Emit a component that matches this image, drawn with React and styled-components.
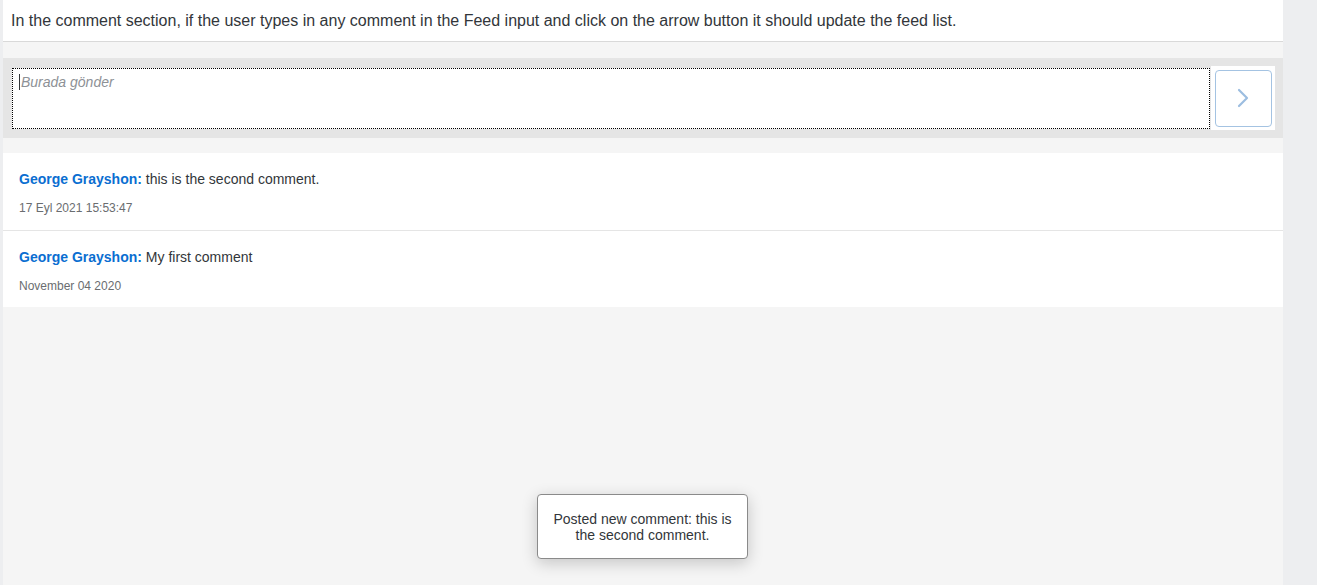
import React from "react";
import styled, { createGlobalStyle } from "styled-components";

const GlobalStyle = createGlobalStyle`
  html, body {
    margin: 0;
    padding: 0;
    height: 100%;
    background: #edeef0;
    font-family: "Liberation Sans", Arial, sans-serif;
  }
  #root {
    height: 100%;
  }
`;

const Shell = styled.div`
  display: flex;
  height: 585px;
  padding-left: 3px;
`;

const Page = styled.div`
  width: 1280px;
  background: #f5f5f5;
  display: flex;
  flex-direction: column;
  position: relative;
`;

const Header = styled.div`
  height: 41px;
  background: #fff;
  border-bottom: 1px solid #d9d9d9;
  display: flex;
  align-items: center;
  padding-left: 8px;
  font-size: 16px;
  color: #32363a;
`;

const FeedInput = styled.div`
  margin-top: 16px;
  background: #e5e5e5;
  height: 80px;
  display: flex;
  align-items: center;
  padding: 0 8px 0 9px;
`;

const TextBox = styled.div`
  flex: 1;
  height: 61px;
  background: #fff;
  border: 1px dotted #000;
  box-sizing: border-box;
  padding: 5px 8px;
  font-size: 14px;
  line-height: 16px;
  font-style: italic;
  color: #8d9196;
`;

const Caret = styled.span`
  display: inline-block;
  width: 1px;
  height: 16px;
  background: #32363a;
  vertical-align: -3px;
  margin-left: -2px;
  margin-right: 1px;
`;

const ButtonWrap = styled.div`
  width: 64px;
  height: 64px;
  background: #fff;
  margin-left: 1px;
  display: flex;
  align-items: center;
  justify-content: center;
`;

const PostButton = styled.button`
  width: 57px;
  height: 57px;
  border: 1px solid #a4c3e2;
  border-radius: 4px;
  background: #fff;
  display: flex;
  align-items: center;
  justify-content: center;
  padding: 0;
`;

const FeedList = styled.ul`
  list-style: none;
  margin: 15px 0 0;
  padding: 0;
  background: #fff;
`;

const FeedItem = styled.li`
  height: 77px;
  box-sizing: border-box;
  padding: 17px 16px 0;
  border-top: ${(p) => (p.first ? "none" : "1px solid #e5e5e5")};
`;

const Line = styled.div`
  font-size: 14px;
  color: #32363a;
  line-height: 18px;
`;

const Sender = styled.span`
  color: #0a6ed1;
  font-weight: bold;
`;

const Stamp = styled.div`
  font-size: 12px;
  line-height: 14px;
  color: #6a6d70;
  margin-top: 13px;
`;

const Toast = styled.div`
  position: absolute;
  left: 534px;
  top: 494px;
  width: 211px;
  height: 65px;
  box-sizing: border-box;
  background: #fff;
  border: 1px solid #8a8a8a;
  border-radius: 4px;
  box-shadow: 0 4px 16px rgba(0, 0, 0, 0.2);
  display: flex;
  align-items: center;
  justify-content: center;
  text-align: center;
  font-size: 14px;
  line-height: 16px;
  color: #32363a;
  padding: 0 12px;
`;

const Side = styled.div`
  flex: 1;
  background: #edeef0;
`;

const comments = [
  { sender: "George Grayshon", text: "this is the second comment.", date: "17 Eyl 2021 15:53:47" },
  { sender: "George Grayshon", text: "My first comment", date: "November 04 2020" },
];

export default function App() {
  return (
    <>
      <GlobalStyle />
      <Shell>
        <Page>
          <Header>
            In the comment section, if the user types in any comment in the Feed input and click on the arrow button it should update the feed list.
          </Header>
          <FeedInput>
            <TextBox>
              <Caret />
              Burada gönder
            </TextBox>
            <ButtonWrap>
              <PostButton aria-label="Post">
                <svg width="14" height="22" viewBox="0 0 14 22">
                  <path d="M3 3 L11 11 L3 19" fill="none" stroke="#9cbde0" strokeWidth="2.2" strokeLinecap="round" strokeLinejoin="round" />
                </svg>
              </PostButton>
            </ButtonWrap>
          </FeedInput>
          <FeedList>
            {comments.map((c, i) => (
              <FeedItem key={i} first={i === 0}>
                <Line>
                  <Sender>{c.sender}:</Sender> {c.text}
                </Line>
                <Stamp>{c.date}</Stamp>
              </FeedItem>
            ))}
          </FeedList>
          <Toast>Posted new comment: this is the second comment.</Toast>
        </Page>
        <Side />
      </Shell>
    </>
  );
}
